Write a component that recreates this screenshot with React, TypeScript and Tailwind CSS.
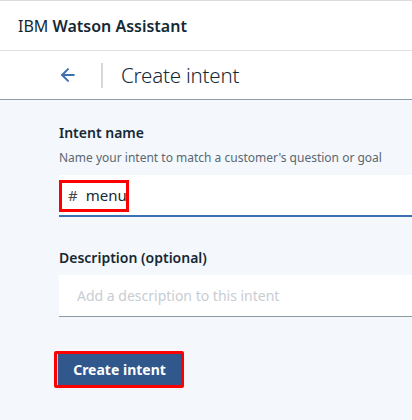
import { ArrowLeft } from "lucide-react";

const font = { fontFamily: '"Noto Sans", "Open Sans", sans-serif' };

export default function App() {
  return (
    <div
      className="w-[412px] h-[420px] flex flex-col bg-[#f4f7fb] text-[#152935] overflow-hidden"
      style={font}
    >
      <header className="h-[51px] shrink-0 bg-white border-t border-t-[#dcdcdc] border-b border-b-[#dfe3e6] flex items-center pl-[18px]">
        <span className="text-[16px] leading-none">
          IBM <span className="font-semibold">Watson Assistant</span>
        </span>
      </header>

      <div className="h-[49px] shrink-0 bg-white border-b border-b-[#8c9ba5] flex items-center pl-[58px]">
        <ArrowLeft className="w-[20px] h-[20px] text-[#3d70b2]" strokeWidth={2.4} />
        <div className="w-[2px] h-[25px] bg-[#d5d8db] ml-[23px]" />
        <h1 className="ml-[18px] text-[20.5px] font-light leading-none tracking-[-0.2px]">
          Create intent
        </h1>
      </div>

      <main className="flex flex-col pl-[59px] pt-[24px]">
        <label className="text-[14px] font-semibold leading-[18px]">Intent name</label>
        <p className="mt-[8px] text-[12px] leading-[16px] text-[#5a6872]">
          Name your intent to match a customer's question or goal
        </p>
        <div className="mt-[9px] h-[42px] bg-white border-b-2 border-b-[#3d70b2] flex items-center">
          <div className="mt-[1px] h-[32px] w-[70px] border-[3px] border-[#ff0000] flex items-center pl-[6px]">
            <span className="text-[15px] text-[#4a4a4a]">#</span>
            <span className="ml-[8px] text-[15px] text-[#152935]">menu</span>
            <span className="w-[1.5px] h-[17px] bg-[#152935]" />
          </div>
        </div>

        <label className="mt-[32px] text-[14px] font-semibold leading-[18px]">
          Description (optional)
        </label>
        <div className="mt-[8px] h-[42px] bg-white border-b border-b-[#8c9ba5] flex items-center pl-[18px]">
          <span className="text-[14px] text-[#c8cdd2]">Add a description to this intent</span>
        </div>

        <div className="mt-[34px] -ml-[5px] w-[130px] h-[37px] border-[3px] border-[#ff0000] rounded-[2px] flex">
          <button className="flex-1 bg-[#30588c] border-l border-l-[#c9d6e6] text-white text-[14px] font-bold flex items-center justify-center">
            Create intent
          </button>
        </div>
      </main>
    </div>
  );
}
